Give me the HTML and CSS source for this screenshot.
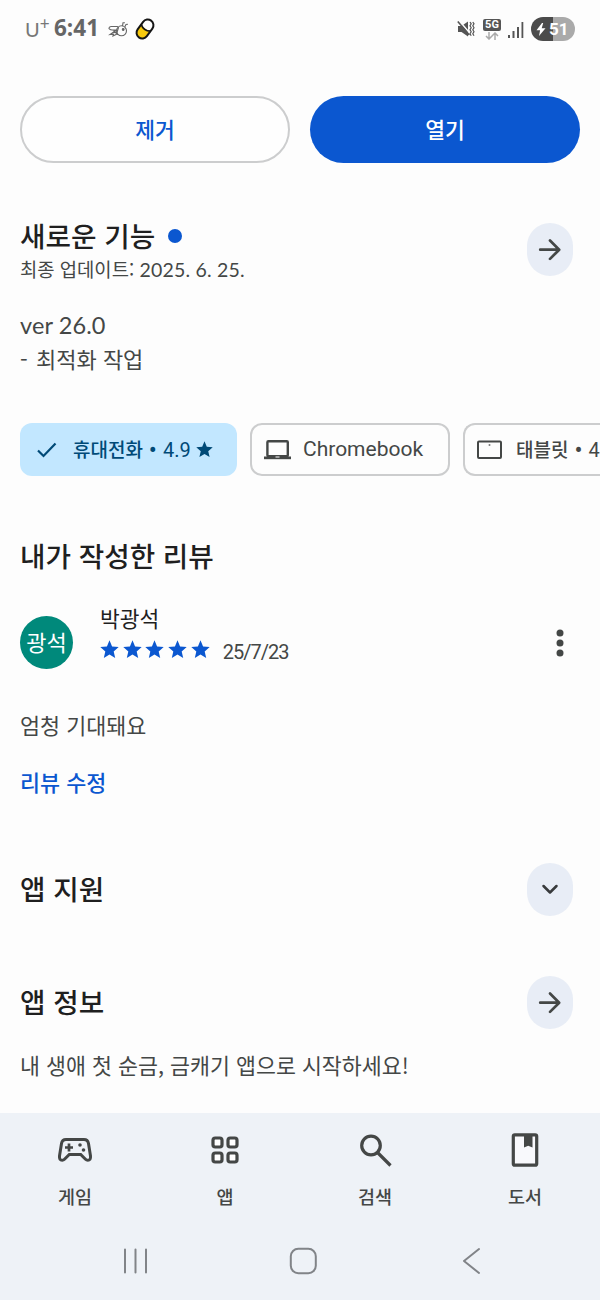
FILE: index.html
```
<!DOCTYPE html>
<html lang="ko">
<head>
<meta charset="utf-8">
<title>앱 정보</title>
<link rel="stylesheet" href="styles.css">
</head>
<body>
<svg class="defs" width="0" height="0">
  <symbol id="star" viewBox="0 0 20 20"><path d="M10 .3l2.700 6.500 7 .6-5.300 4.600 1.600 6.900L10 15.200l-6 3.700 1.600-6.900L.3 7.400l7-.6z"/></symbol>
  <symbol id="arrow" viewBox="0 0 24 24"><path d="M2.200 11.700H21M12 2.500L21.200 11.700 12 20.900" fill="none" stroke="#444746" stroke-width="2.700" stroke-linecap="round" stroke-linejoin="round"/></symbol>
</svg>
<header class="status">
  <div class="status-left">
    <span class="carrier">U<span class="plus">+</span></span>
    <span class="clock">6:41</span>
    <svg class="bee" width="20" height="17" viewBox="0 0 20 17" fill="none" stroke="#666" stroke-width="1.1" stroke-linecap="round">
      <circle cx="13.5" cy="9.800" r="5"/><path d="M9.500 5.500H3Q.8 5.800 1 7.500 2 9.500 8.500 9M8.500 9L2 13.500l3.500-.3-.5 1.800 4-2M10.500 6.500l-2 6.500M6 10l3.500 3.500M14.500 4.800l.5-3h1.500M17 5.500l1-2 1.500-.3"/><circle cx="15.200" cy="8.500" r=".9" fill="#555"/>
    </svg>
    <svg class="pill" width="22" height="24" viewBox="0 0 22 24">
      <g transform="rotate(36 11 12)"><rect x="5.300" y="1.600" width="11.400" height="20.800" rx="5.700" fill="#fff"/><path d="M5.300 11.500h11.400v5.200a5.700 5.700 0 0 1-11.400 0z" fill="#f7c90d"/><rect x="5.300" y="1.600" width="11.400" height="20.800" rx="5.700" fill="none" stroke="#151515" stroke-width="2"/><path d="M5.300 10.500q5.700 4 11.400 0" fill="none" stroke="#151515" stroke-width="1.800"/></g>
    </svg>
  </div>
  <div class="status-right">
    <svg width="18" height="18" viewBox="0 0 18 18">
      <path d="M1 6h3.500l6.500-4.500v15L4.500 12H1z" fill="#555"/><path d="M1.500 0l12 14" stroke="#fdfdfd" stroke-width="1.600"/><path d="M.8 1.500l11.500 13.500" stroke="#555" stroke-width="1.600"/><path d="M13 2l1.200 1.800-1.200 2 1.200 2-1.200 2 1.200 2-1.200 2 1.200 2M15.800 2l1.200 1.800-1.200 2 1.200 2-1.200 2 1.200 2-1.200 2 1.200 2" fill="none" stroke="#555" stroke-width="1.200"/>
    </svg>
    <div class="network">
      <span class="five-g">5G</span>
      <svg width="14" height="8" viewBox="0 0 14 8" fill="none" stroke="#aaa" stroke-width="1.500"><path d="M4 0v7M1 4l3 3 3-3M10 8V1M7 4l3-3 3 3"/></svg>
    </div>
    <svg class="signal" width="16" height="17" viewBox="0 0 16 17" fill="#555"><path d="M0 14h2v3H0z"/><path d="M4.500 10h2v7h-2z"/><path d="M9 6h2v11H9z"/><path d="M13.500 1h1.800v16h-1.800z"/></svg>
    <div class="battery">
      <svg width="10" height="13" viewBox="0 0 10 13"><path d="M6 0L.5 7.200h3.600L3 13l6.500-7.700H5.700L7.200 0z" fill="#fff"/></svg><span>51</span>
    </div>
  </div>
</header>

<main class="content">
  <div class="actions">
    <button class="btn btn-outline">제거</button>
    <button class="btn btn-filled">열기</button>
  </div>

  <section class="whats-new">
    <div>
      <h2 class="heading">새로운 기능<span class="new-dot"></span></h2>
      <p class="updated">최종 업데이트: <span class="updated-date">2025. 6. 25.</span></p>
    </div>
    <button class="round-btn"><svg width="24" height="24"><use href="#arrow"/></svg></button>
  </section>
  <div class="notes">
    <p class="version">ver 26.0</p>
    <p><span class="dash">-</span>최적화 작업</p>
  </div>

  <div class="chips">
    <div class="chip chip-selected">
      <svg width="20" height="16" viewBox="0 0 20 16"><path d="M1 8.500l5.500 5.500L18.500 1.500" fill="none" stroke="#004a77" stroke-width="2.200"/></svg>
      <span class="chip-text"><b class="device">휴대전화</b><i class="sep">•</i><span class="rating">4.9</span></span>
      <svg class="chip-star" width="17" height="17"><use href="#star"/></svg>
    </div>
    <div class="chip chip-chromebook">
      <svg width="27" height="20" viewBox="0 0 27 20"><rect x="3.400" y="1.200" width="20.400" height="15" rx="1" fill="none" stroke="#444746" stroke-width="2.400"/><path d="M0 16.500h27v2.700H0z" fill="#444746"/><path d="M11.500 16.500h4v1h-4z" fill="#fff"/></svg>
      <span class="chromebook">Chromebook</span>
    </div>
    <div class="chip chip-tablet">
      <svg width="25" height="20" viewBox="0 0 25 20"><rect x="1" y="1.500" width="23" height="16.500" rx="1" fill="none" stroke="#444746" stroke-width="2"/><circle cx="12.500" cy="5" r="1" fill="#777"/></svg>
      <span class="chip-text"><b class="device">태블릿</b><i class="sep">•</i><span class="rating">4</span></span>
    </div>
  </div>

  <h2 class="heading my-review">내가 작성한 리뷰</h2>
  <div class="review">
    <div class="avatar">광석</div>
    <div class="reviewer">
      <div class="name">박광석</div>
      <div class="score">
        <div class="stars">
          <svg width="19" height="19"><use href="#star"/></svg><svg width="19" height="19"><use href="#star"/></svg><svg width="19" height="19"><use href="#star"/></svg><svg width="19" height="19"><use href="#star"/></svg><svg width="19" height="19"><use href="#star"/></svg>
        </div>
        <span class="review-date">25/7/23</span>
      </div>
    </div>
    <svg class="more" width="8" height="30" viewBox="0 0 8 30" fill="#444746"><circle cx="4" cy="5" r="3.500"/><circle cx="4" cy="15" r="3.500"/><circle cx="4" cy="25" r="3.500"/></svg>
  </div>
  <p class="review-text">엄청 기대돼요</p>
  <a class="edit-link">리뷰 수정</a>

  <section class="row row-support">
    <h2 class="heading">앱 지원</h2>
    <button class="round-btn"><svg width="24" height="24" viewBox="0 0 24 24"><path d="M5.500 8l6.500 6.500L18.500 8" fill="none" stroke="#383a3c" stroke-width="2.500" stroke-linecap="round" stroke-linejoin="round"/></svg></button>
  </section>
  <section class="row row-info">
    <h2 class="heading">앱 정보</h2>
    <button class="round-btn"><svg width="24" height="24"><use href="#arrow"/></svg></button>
  </section>
  <p class="description">내 생애 첫 순금, 금캐기 앱으로 시작하세요!</p>
</main>

<footer class="bottom">
  <nav class="tabs">
    <div class="tab">
      <svg width="36" height="36" viewBox="0 0 36 36"><path d="M9 7.500h18q3.800 0 4.500 4l2 12.500q.4 4.300-2.700 4.300-1.300 0-2.300-1L23.700 22.500H12.300L7.500 27.300q-1 1-2.300 1-3.100 0-2.700-4.300l2-12.500q.7-4 4.500-4z" fill="none" stroke="#444746" stroke-width="3"/><path d="M12 11.500v8M8 15.500h8" stroke="#444746" stroke-width="2.700"/><circle cx="23" cy="13" r="1.800" fill="#444746"/><circle cx="26.500" cy="18" r="1.800" fill="#444746"/></svg>
      <span>게임</span>
    </div>
    <div class="tab">
      <svg width="36" height="36" viewBox="0 0 36 36" fill="#fff" stroke="#444746" stroke-width="3.200"><rect x="6" y="6" width="9" height="9" rx="2.200"/><rect x="21" y="6" width="9" height="9" rx="2.200"/><rect x="6" y="21" width="9" height="9" rx="2.200"/><rect x="21" y="21" width="9" height="9" rx="2.200"/></svg>
      <span>앱</span>
    </div>
    <div class="tab">
      <svg width="36" height="36" viewBox="0 0 36 36" fill="none" stroke="#444746" stroke-width="3.200"><circle cx="14" cy="13.500" r="9.300"/><path d="M20.500 20.500L33.500 33.500"/></svg>
      <span>검색</span>
    </div>
    <div class="tab">
      <svg width="36" height="36" viewBox="0 0 36 36"><rect x="6.300" y="2.800" width="23.400" height="30.400" rx="1.500" fill="#f8f9fc" stroke="#444746" stroke-width="3.200"/><path d="M17 3h8.500v12.500L21.200 13.800 17 15.500z" fill="#444746"/></svg>
      <span>도서</span>
    </div>
  </nav>
  <div class="system-nav">
    <svg width="28" height="28" viewBox="0 0 28 28"><path d="M4 2.500v23M14.500 2.500v23M25 2.500v23" stroke="#818488" stroke-width="2" stroke-linecap="round"/></svg>
    <svg width="28" height="28" viewBox="0 0 28 28"><rect x="1.800" y="1.800" width="25" height="24.400" rx="7.500" fill="none" stroke="#818488" stroke-width="2"/></svg>
    <svg width="28" height="28" viewBox="0 0 28 28"><path d="M22 2L7 14l15 12" fill="none" stroke="#818488" stroke-width="2" stroke-linecap="round" stroke-linejoin="round"/></svg>
  </div>
</footer>
</body>
</html>
```
FILE: styles.css
```
* { box-sizing: border-box; }
body {
  margin: 0;
  width: 600px;
  height: 1300px;
  overflow: hidden;
  display: flex;
  flex-direction: column;
  background: #fdfdfd;
  color: #444746;
  font-family: "Noto Sans CJK KR", sans-serif;
}
h2, p { margin: 0; }
svg { display: block; flex: none; }
button { font-family: inherit; padding: 0; border: 0; }
.defs { position: absolute; }

.status {
  height: 60px;
  padding: 0 25px 2px;
  display: flex;
  align-items: center;
  justify-content: space-between;
  color: #666;
  flex: none;
}
.status-left, .status-right { display: flex; align-items: center; }
.carrier { display: flex; font: 400 20px/28px Lato, sans-serif; width: 29px; height: 28px; color: #777; }
.plus { font-size: 17px; line-height: 17px; }
.clock { font: 700 22.5px/26px "Open Sans", sans-serif; width: 54px; height: 28px; }
.pill { margin-left: 6px; }
.network { width: 18px; margin: 0 7px 0 8px; display: flex; flex-direction: column; align-items: center; gap: 1px; }
.five-g {
  width: 18px;
  height: 12px;
  border-radius: 2px;
  background: #555;
  color: #fff;
  font: 700 11px/12px Roboto, sans-serif;
  text-align: center;
}
.battery {
  width: 44px;
  height: 24px;
  margin-left: 7px;
  padding-left: 5px;
  border-radius: 12px;
  background: linear-gradient(90deg, #4b4b4b 50%, #aaa 50%);
  color: #fff;
  display: flex;
  align-items: center;
  gap: 3px;
  font: 700 17px/24px Roboto, sans-serif;
}

.content { height: 1053px; padding: 36px 20px 0; flex: none; overflow: hidden; }
.actions { display: flex; gap: 20px; }
.btn { width: 270px; height: 67px; padding-bottom: 2px; border-radius: 34px; font-size: 21.5px; font-weight: 500; line-height: 32px; }
.btn-outline { border: 2px solid #cccdce; background: #fefefe; color: #0b57d0; }
.btn-filled { background: #0b57d0; color: #fff; }

.whats-new { display: flex; justify-content: space-between; height: 69px; margin-top: 51px; padding-right: 7px; }
.whats-new .round-btn { margin-top: 9px; }
.heading { display: flex; align-items: center; font-size: 27.7px; font-weight: 500; line-height: 42px; color: #1f1f1f; white-space: nowrap; }
.new-dot { width: 14px; height: 14px; margin: 2px 0 0 13px; border-radius: 50%; background: #0b57d0; }
.updated { font-size: 18.8px; line-height: 26px; height: 26px; white-space: nowrap; }
.updated-date { font-family: Lato, sans-serif; font-size: 19.5px; letter-spacing: .2px; }
.round-btn {
  width: 46px;
  height: 53px;
  border-radius: 23px;
  background: #e8edf6;
  display: flex;
  align-items: center;
  justify-content: center;
  flex: none;
}
.notes { height: 66px; margin-top: 26px; font-size: 22px; line-height: 33px; }
.version { font-family: Lato, sans-serif; font-size: 23.5px; letter-spacing: .1px; }
.dash { display: inline-block; width: 16px; }

.chips { display: flex; gap: 13px; margin: 48px -20px 0 0; overflow: hidden; }
.chip {
  height: 53px;
  border: 2px solid #cccdce;
  border-radius: 12px;
  display: flex;
  align-items: center;
  flex: none;
  font-size: 19px;
  font-weight: 500;
  white-space: nowrap;
}
.chip-text { display: flex; align-items: center; height: 28px; line-height: 26px; }
.device { font-weight: 500; padding-bottom: 2px; }
.chip-selected { width: 217px; padding-left: 17px; border: 0; background: #c2e7ff; color: #004a77; }
.chip-selected .chip-text { margin-left: 16px; }
.chip-star { margin-left: 5px; fill: #004a77; }
.chip-chromebook { width: 200px; padding-left: 12px; }
.chromebook { margin-left: 12px; padding-bottom: 2px; font: 400 21px/30px Roboto, sans-serif; }
.chip-tablet { width: 137px; padding-left: 12px; border-right: 0; border-radius: 12px 0 0 12px; }
.chip-tablet .chip-text { margin-left: 14px; }
.sep { width: 20px; text-align: center; font: 400 24px/26px Roboto, sans-serif; }
.rating { font: 400 20px/26px Roboto, sans-serif; }

.my-review { margin-top: 58px; }
.review { display: flex; align-items: center; height: 73px; margin-top: 30px; padding-right: 16px; }
.avatar {
  width: 53px;
  height: 53px;
  border-radius: 50%;
  background: #00897b;
  color: #fff;
  font-size: 22px;
  line-height: 51px;
  text-align: center;
}
.reviewer { align-self: flex-start; margin-left: 27px; flex: 1; }
.name { height: 27px; font-size: 21.5px; line-height: 24px; color: #1f1f1f; }
.score { display: flex; align-items: center; height: 33px; }
.stars { display: flex; gap: 3.7px; fill: #0b57d0; }
.review-date { margin: 5px 0 0 13px; font: 400 20px/28px Roboto, sans-serif; letter-spacing: -1px; }
.review-text { margin-top: 29px; font-size: 21.8px; line-height: 33px; }
.edit-link { display: block; margin-top: 24px; font-size: 21.8px; font-weight: 500; line-height: 33px; color: #0b57d0; }
.row { display: flex; align-items: center; justify-content: space-between; height: 53px; padding-right: 7px; }
.row .heading { padding-bottom: 3px; }
.row-support { margin-top: 65px; }
.row-info { margin-top: 60px; }
.description { margin-top: 19px; font-size: 21.7px; line-height: 33px; white-space: nowrap; }

.bottom { height: 187px; background: #eef2f7; flex: none; }
.tabs { display: grid; grid-template-columns: repeat(4, 1fr); height: 112px; padding-top: 19px; }
.tab { display: flex; flex-direction: column; align-items: center; gap: 15px; font-size: 18.5px; font-weight: 500; line-height: 27px; }
.system-nav { display: flex; justify-content: space-between; padding: 22px 115px 0 121px; }
```
